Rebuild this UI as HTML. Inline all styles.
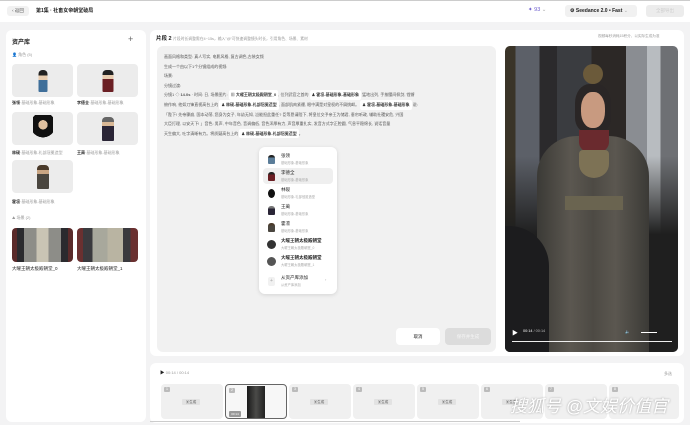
<!DOCTYPE html>
<html><head><meta charset="utf-8"><style>
*{box-sizing:border-box;margin:0;padding:0}
body{width:690px;height:425px;overflow:hidden;background:#f3f3f4;font-family:"Liberation Sans","Noto Sans CJK SC",sans-serif;color:#222;position:relative;font-size:5px}
.abs{position:absolute}
.top{left:0;top:0;width:690px;height:22px;background:#fff;border-top:1px solid #ccc}
.panel{background:#fff;border-radius:6px}
.t{color:#999;font-size:4px}
.card{background:#ececec;border-radius:4px}
.fig{position:absolute;left:50%;transform:translateX(-50%)}
.line{height:4px;background:#cfcfcf;border-radius:1px;position:absolute}
.tag{display:inline-block;background:#fff;border-radius:2px;padding:0 2px;color:#333;font-weight:bold}
.seg{position:absolute;top:384px;width:62px;height:35px;background:#f0f0f0;border-radius:4px}
.seg .n{position:absolute;left:3px;top:3px;width:6px;height:5px;background:#bbb;border-radius:1px;color:#fff;font-size:3.5px;text-align:center}
.seg .g{position:absolute;left:21px;top:15px;width:18px;height:6px;background:#e2e2e2;border-radius:1px;font-size:3.5px;text-align:center;color:#555;line-height:6px}
.dd{left:259px;top:147px;width:78px;height:147px;background:#fff;border-radius:6px;box-shadow:0 1px 4px rgba(0,0,0,.12)}
.it{position:absolute;left:4px;width:70px;height:16px}
.it .av{position:absolute;left:5px;top:4px;width:7px;height:9px;border-radius:3px 3px 1px 1px}
.it .a{position:absolute;left:18px;top:2px;font-size:4.5px;color:#222}
.it .b{position:absolute;left:18px;top:9px;font-size:3.3px;color:#aaa}
</style></head><body>
<div class="abs top">
 <div class="abs" style="left:7px;top:5px;width:22px;height:10px;background:#f1f1f1;border-radius:3px;font-size:4.5px;color:#555;line-height:10px;text-align:center">‹ 返回</div>
 <div class="abs" style="left:36px;top:6px;font-size:5px;font-weight:bold">第1集 · 社畜女帝朝堂破局</div>
 <div class="abs" style="left:528px;top:6px;font-size:5.5px;color:#6a5acd">✦ 93 <span style="color:#aaa">⌄</span></div>
 <div class="abs" style="left:565px;top:4px;width:72px;height:12px;background:#f1f1f1;border-radius:3px;font-size:5px;font-weight:bold;line-height:12px;padding-left:5px">⚙ Seedance 2.0 • Fast <span style="color:#aaa;font-weight:normal">⌄</span></div>
 <div class="abs" style="left:646px;top:4px;width:38px;height:12px;background:#ececec;border-radius:3px;color:#ccc;font-size:4.5px;line-height:12px;text-align:center">全部导出</div>
</div>

<!-- left panel -->
<div class="abs panel" style="left:6px;top:30px;width:140px;height:392px">
 <div class="abs" style="left:6px;top:7px;font-size:6px;font-weight:bold">资产库</div>
 <div class="abs" style="left:122px;top:4px;font-size:9px;color:#666">+</div>
 <div class="abs t" style="left:6px;top:22px">👤 角色 (5)</div>
 <div class="abs card" style="left:6px;top:34px;width:61px;height:33px"><div class="fig" style="top:6px;width:9px;height:22px;background:linear-gradient(#222 0 25%,#e8cdb0 25% 45%,#3f6f9a 45%);border-radius:4px 4px 1px 1px"></div></div>
 <div class="abs card" style="left:71px;top:34px;width:61px;height:33px"><div class="fig" style="top:6px;width:11px;height:22px;background:linear-gradient(#222 0 22%,#e8cdb0 22% 40%,#6b1f24 40%);border-radius:4px 4px 1px 1px"></div></div>
 <div class="abs" style="left:6px;top:70px;font-size:4px"><b>张领</b><span style="color:#999">·基础形象-基础形象</span></div>
 <div class="abs" style="left:71px;top:70px;font-size:4px"><b>李德全</b><span style="color:#999">·基础形象-基础形象</span></div>
 <div class="abs card" style="left:6px;top:82px;width:61px;height:33px"><div class="fig" style="top:3px;width:20px;height:28px;background:radial-gradient(circle at 50% 35%,#e0c1a0 0 22%,#111 23% 60%,transparent 61%)"></div></div>
 <div class="abs card" style="left:71px;top:82px;width:61px;height:33px"><div class="fig" style="top:5px;width:12px;height:24px;background:linear-gradient(#666 0 20%,#d9b896 20% 38%,#2a2536 38%);border-radius:4px 4px 1px 1px"></div></div>
 <div class="abs" style="left:6px;top:120px;font-size:4px"><b>林砚</b><span style="color:#999">·基础形象-礼部冠冕造型</span></div>
 <div class="abs" style="left:71px;top:120px;font-size:4px"><b>王蔺</b><span style="color:#999">·基础形象-基础形象</span></div>
 <div class="abs card" style="left:6px;top:130px;width:61px;height:33px"><div class="fig" style="top:5px;width:12px;height:24px;background:linear-gradient(#4a3a2a 0 20%,#c9a583 20% 38%,#4a463f 38%);border-radius:4px 4px 1px 1px"></div></div>
 <div class="abs" style="left:6px;top:169px;font-size:4px"><b>霍凛</b><span style="color:#999">·基础形象-基础形象</span></div>
 <div class="abs t" style="left:6px;top:185px">⛰ 场景 (2)</div>
 <div class="abs" style="left:6px;top:198px;width:61px;height:34px;border-radius:4px;background:linear-gradient(90deg,#5a2a2a 0 8%,#2a2a2e 8% 20%,#8d8d88 20% 40%,#c9c4b4 40% 60%,#8d8d88 60% 80%,#2a2a2e 80% 92%,#5a2a2a 92%)"></div>
 <div class="abs" style="left:71px;top:198px;width:61px;height:34px;border-radius:4px;background:linear-gradient(90deg,#6a3030 0 10%,#3a3a3e 10% 25%,#a8a89c 25% 50%,#b9b4a2 50% 75%,#3a3a3e 75% 88%,#6a3030 88%)"></div>
 <div class="abs" style="left:6px;top:236px;font-size:4.5px">大曜王朝太极殿朝堂_0</div>
 <div class="abs" style="left:71px;top:236px;font-size:4.5px">大曜王朝太极殿朝堂_1</div>
</div>

<!-- main panel -->
<div class="abs panel" style="left:150px;top:30px;width:534px;height:326px">
 <div class="abs" style="left:6px;top:4px;font-size:5.5px;font-weight:bold">片段 2 <span style="font-weight:normal;color:#999;font-size:3.8px">片段时长调整需在4~15s，输入"@"可快速调整镜头时长，引用角色、场景、素材</span></div>
 <div class="abs t" style="left:448px;top:4px;font-size:3.6px">视频每秒消耗15积分，以实际生成为准</div>
 <div class="abs" style="left:7px;top:16px;width:339px;height:306px;background:#f1f1f1;border-radius:6px;font-size:4px;color:#555;line-height:9.6px;padding:6px 7px">
  画面风格和类型: 真人写实, 电影风格, 复古调色,古装女频<br>生成一个由以下1个分镜组成的视频:<br>场景:<br>分镜过渡:<br>
  分镜1 ◇ <b>14.0s</b> · 时间: 日, 场景图片: <span class="tag">▦ 大曜王朝太极殿朝堂_0</span>, 位列武官之首的 <span class="tag">♟ 霍凛-基础形象-基础形象</span> 猛地出列, 手按腰间佩剑, 铿锵<br>
  俯作响, 他如刀锋直视高台上的 <span class="tag">♟ 林砚-基础形象-礼部冠冕造型</span>, 面部肌肉紧绷, 眼中满是对皇权的不屑挑衅。 <span class="tag">♟ 霍凛-基础形象-基础形象</span> 说:<br>
  「陛下! 先帝骤崩, 国本动荡, 您身为女子, 年幼无知, 岂能担此重任? 臣等恳请陛下, 将皇位交予亲王为储君, 垂帘听政, 辅助社稷安危, 兴国<br>
  大臣打理, 以安天下! 」音色: 男声, 中年音色, 音调偏低, 音色浑厚有力, 声音厚重扎实, 发音方式字正腔圆, 气息平稳绵长, 说话音量<br>
  天生偏大, 吐字清晰有力。将质疑高台上的 <span class="tag">♟ 林砚-基础形象-礼部冠冕造型</span>。
 </div>
 <div class="abs" style="left:246px;top:298px;width:44px;height:17px;background:#fff;border-radius:4px;font-size:4.5px;text-align:center;line-height:17px">取消</div>
 <div class="abs" style="left:295px;top:298px;width:46px;height:17px;background:#dcdcdc;border-radius:4px;font-size:4.5px;text-align:center;line-height:17px;color:#f5f5f5">保存并生成</div>
 <!-- video -->
 <div class="abs" style="left:355px;top:16px;width:173px;height:306px;border-radius:5px;overflow:hidden;background:linear-gradient(90deg,#3a3428 0 6%,#5c6068 6% 20%,#2b2a2c 20% 30%,#3a3c40 30% 50%,#2c2826 50% 70%,#8a8d92 70% 82%,#b8bcc0 82% 90%,#6e7074 90%)">
  <div class="abs" style="left:0;top:110px;width:173px;height:196px;background:linear-gradient(#2a2a2a00,#1f1f1f 40%)"></div>
  <div class="abs" style="left:78px;top:18px;width:20px;height:20px;border-radius:50%;background:#6b5a3a"></div>
  <div class="abs" style="left:70px;top:38px;width:36px;height:48px;border-radius:40% 40% 30% 30%;background:#2a2626"></div>
  <div class="abs" style="left:76px;top:46px;width:24px;height:36px;border-radius:45% 45% 45% 45%;background:#c89a80"></div>
  <div class="abs" style="left:32px;top:90px;width:112px;height:216px;border-radius:40px 40px 0 0;background:linear-gradient(90deg,#3b3a36,#5b5750 30%,#4d4a44 50%,#5b5750 70%,#3b3a36)"></div>
  <div class="abs" style="left:74px;top:84px;width:30px;height:22px;background:#6a2a2e;border-radius:0 0 10px 10px"></div>
  <div class="abs" style="left:74px;top:104px;width:30px;height:28px;background:#7d7255;border-radius:4px 4px 50% 50%"></div>
  <div class="abs" style="left:60px;top:150px;width:58px;height:14px;background:#6a6450"></div>
  <div class="abs" style="left:0;top:180px;width:44px;height:126px;background:#1c1c1e;border-radius:0 40px 0 0"></div>
  <div class="abs" style="left:7px;top:282px;color:#fff;font-size:6px">▶</div>
  <div class="abs" style="left:18px;top:283px;color:#fff;font-size:3.8px">00:14 <span style="color:#bbb">/ 00:14</span></div>
  <div class="abs" style="left:120px;top:283px;color:#ddd;font-size:4px">🔈</div>
  <div class="abs" style="left:136px;top:286px;width:16px;height:1px;background:#fff"></div>
  <div class="abs" style="left:7px;top:295px;width:160px;height:1px;background:#eee"></div>
 </div>
</div>

<!-- dropdown -->
<div class="abs dd">
 <div class="it" style="top:4px"><div class="av" style="background:linear-gradient(#222 30%,#5b7d99 30%)"></div><div class="a">张领</div><div class="b">基础形象-基础形象</div></div>
 <div class="it" style="top:21px;background:#efefef;border-radius:4px"><div class="av" style="background:linear-gradient(#222 30%,#6b1f24 30%)"></div><div class="a">李德全</div><div class="b">基础形象-基础形象</div></div>
 <div class="it" style="top:38px"><div class="av" style="background:#111;border-radius:50%"></div><div class="a">林砚</div><div class="b">基础形象-礼部冠冕造型</div></div>
 <div class="it" style="top:55px"><div class="av" style="background:linear-gradient(#777 30%,#2a2536 30%)"></div><div class="a">王蔺</div><div class="b">基础形象-基础形象</div></div>
 <div class="it" style="top:72px"><div class="av" style="background:linear-gradient(#4a3a2a 30%,#4a463f 30%)"></div><div class="a">霍凛</div><div class="b">基础形象-基础形象</div></div>
 <div class="it" style="top:89px"><div class="av" style="background:#333;border-radius:50%;width:9px;height:9px;left:4px"></div><div class="a" style="font-weight:bold">大曜王朝太极殿朝堂</div><div class="b">大曜王朝太极殿朝堂_0</div></div>
 <div class="it" style="top:106px"><div class="av" style="background:#555;border-radius:50%;width:9px;height:9px;left:4px"></div><div class="a" style="font-weight:bold">大曜王朝太极殿朝堂</div><div class="b">大曜王朝太极殿朝堂_1</div></div>
 <div class="it" style="top:126px"><div class="av" style="background:#f1f1f1;border-radius:2px;color:#aaa;font-size:5px;text-align:center;line-height:9px">+</div><div class="a">从资产库添加</div><div class="b">从资产库添加</div><div class="abs" style="left:62px;top:4px;color:#aaa;font-size:4px">›</div></div>
</div>

<!-- timeline -->
<div class="abs panel" style="left:150px;top:363px;width:534px;height:60px">
 <div class="abs" style="left:10px;top:7px;font-size:4.5px">▶ <span style="color:#999;font-size:4px">00:14 / 00:14</span></div>
 <div class="abs t" style="left:514px;top:8px">多选</div>
 <div class="abs" style="left:0;top:58px;width:370px;height:1px;background:#ccc"></div>
</div>
<div class="seg" style="left:161px"><div class="n">1</div><div class="g">▣生成</div></div>
<div class="seg" style="left:225px;border:1px solid #666;background:#f7f7f7"><div class="n">2</div><div class="abs" style="left:21px;top:1px;width:18px;height:32px;background:linear-gradient(90deg,#1a1a1a,#4a4a48 50%,#222)"></div><div class="abs" style="left:3px;top:26px;width:12px;height:6px;background:#999;border-radius:1px;font-size:3px;color:#fff;text-align:center;line-height:6px">00:14</div></div>
<div class="seg" style="left:289px"><div class="n">3</div><div class="g">▣生成</div></div>
<div class="seg" style="left:353px"><div class="n">4</div><div class="g">▣生成</div></div>
<div class="seg" style="left:417px"><div class="n">5</div><div class="g">▣生成</div></div>
<div class="seg" style="left:481px"><div class="n">6</div><div class="g">▣生成</div></div>
<div class="seg" style="left:545px"><div class="n">7</div></div>
<div class="seg" style="left:609px;width:70px"><div class="n">8</div></div>
<div class="abs" style="left:510px;top:392px;font-size:17px;color:#fff;text-shadow:0 0 2px rgba(0,0,0,.35);font-style:italic;white-space:nowrap">搜狐号 @文娱价值官</div>
</body></html>
